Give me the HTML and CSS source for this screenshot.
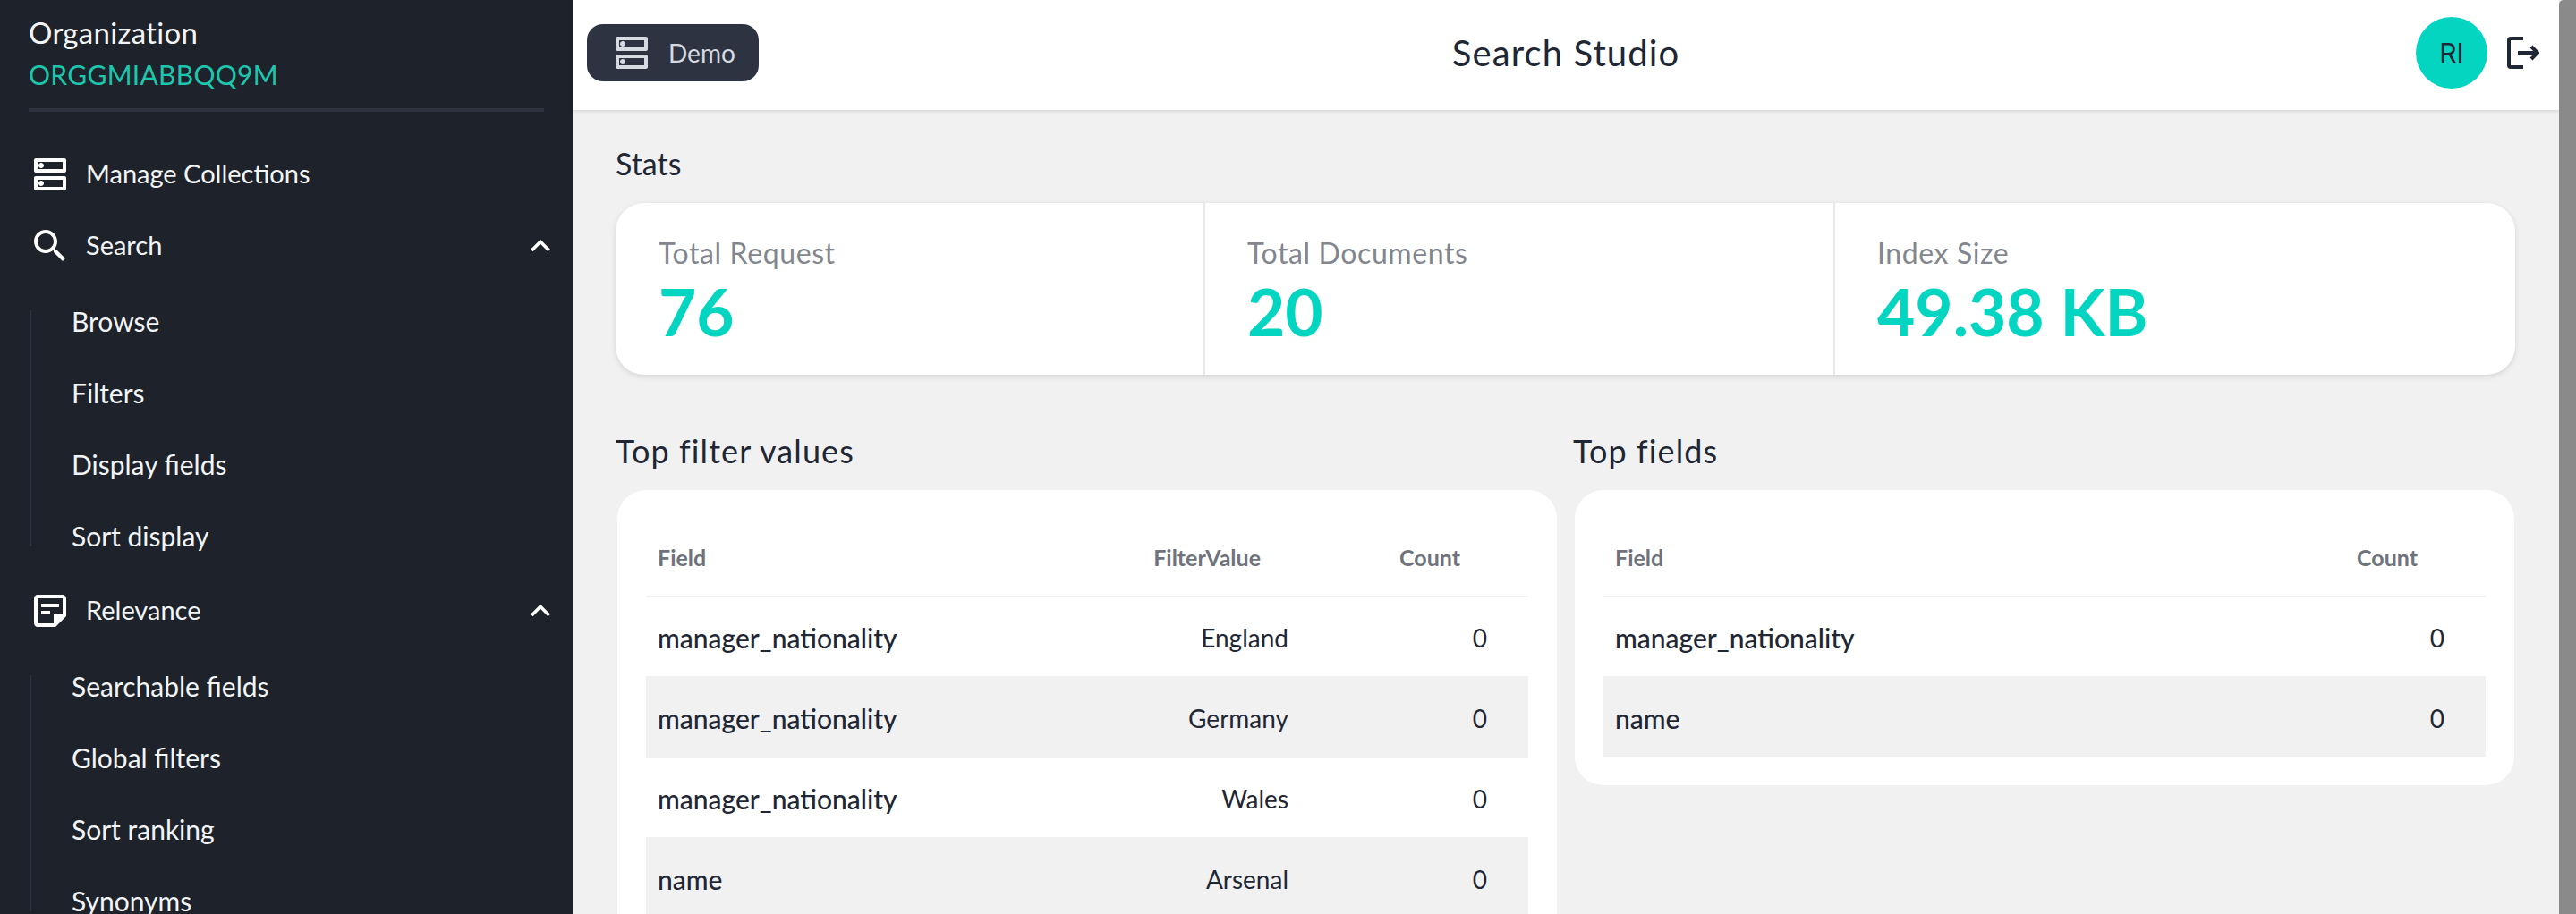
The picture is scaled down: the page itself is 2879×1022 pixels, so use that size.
FILE: index.html
```html
<!DOCTYPE html>
<html>
<head>
    <title>Search Studio</title>
    <link rel="stylesheet" href="styles.css">
</head>
<body>
    <aside class="sidebar">
        <div class="org">
            <div class="org-label">Organization</div>
            <div class="org-id">ORGGMIABBQQ9M</div>
        </div>
        <nav class="nav">
            <div class="nav-item">
                <svg class="nav-icon" viewBox="0 0 24 24"><path d="M19 15v4H5v-4h14m1-2H4c-.55 0-1 .45-1 1v6c0 .55.45 1 1 1h16c.55 0 1-.45 1-1v-6c0-.55-.45-1-1-1zM7 18.5c-.82 0-1.5-.67-1.5-1.5s.68-1.5 1.5-1.5 1.5.67 1.5 1.5-.67 1.5-1.5 1.5zM19 5v4H5V5h14m1-2H4c-.55 0-1 .45-1 1v6c0 .55.45 1 1 1h16c.55 0 1-.45 1-1V4c0-.55-.45-1-1-1zM7 8.5c-.82 0-1.5-.67-1.5-1.5S6.18 5.5 7 5.5 8.5 6.18 8.5 7 7.83 8.5 7 8.5z"/></svg>
                <span class="nav-label">Manage Collections</span>
            </div>
            <div class="nav-item">
                <svg class="nav-icon" viewBox="0 0 24 24"><path d="M15.5 14h-.79l-.28-.27C15.41 12.59 16 11.11 16 9.5 16 5.91 13.09 3 9.5 3S3 5.91 3 9.5 5.91 16 9.5 16c1.61 0 3.09-.59 4.23-1.57l.27.28v.79l5 4.99L20.49 19l-4.99-5zm-6 0C7.01 14 5 11.99 5 9.5S7.01 5 9.5 5 14 7.01 14 9.5 11.99 14 9.5 14z"/></svg>
                <span class="nav-label">Search</span>
                <svg class="nav-chevron" viewBox="0 0 24 24"><path d="M12 8l-6 6 1.41 1.41L12 10.83l4.59 4.58L18 14z"/></svg>
            </div>
            <div class="sub-nav">
                <div class="sub-item">Browse</div>
                <div class="sub-item">Filters</div>
                <div class="sub-item">Display fields</div>
                <div class="sub-item">Sort display</div>
            </div>
            <div class="nav-item">
                <svg class="nav-icon" viewBox="0 0 24 24"><path d="M19 5v9h-5v5H5V5h14m0-2H5c-1.1 0-2 .9-2 2v14c0 1.1.9 2 2 2h10l6-6V5c0-1.1-.9-2-2-2zm-7 11H7v-2h5v2zm5-4H7V8h10v2z"/></svg>
                <span class="nav-label">Relevance</span>
                <svg class="nav-chevron" viewBox="0 0 24 24"><path d="M12 8l-6 6 1.41 1.41L12 10.83l4.59 4.58L18 14z"/></svg>
            </div>
            <div class="sub-nav">
                <div class="sub-item">Searchable fields</div>
                <div class="sub-item">Global filters</div>
                <div class="sub-item">Sort ranking</div>
                <div class="sub-item">Synonyms</div>
            </div>
        </nav>
    </aside>

    <div class="page">
        <header class="topbar">
            <div class="topbar-left">
                <button class="demo-button">
                    <svg class="demo-icon" viewBox="0 0 24 24"><path d="M19 15v4H5v-4h14m1-2H4c-.55 0-1 .45-1 1v6c0 .55.45 1 1 1h16c.55 0 1-.45 1-1v-6c0-.55-.45-1-1-1zM7 18.5c-.82 0-1.5-.67-1.5-1.5s.68-1.5 1.5-1.5 1.5.67 1.5 1.5-.67 1.5-1.5 1.5zM19 5v4H5V5h14m1-2H4c-.55 0-1 .45-1 1v6c0 .55.45 1 1 1h16c.55 0 1-.45 1-1V4c0-.55-.45-1-1-1zM7 8.5c-.82 0-1.5-.67-1.5-1.5S6.18 5.5 7 5.5 8.5 6.18 8.5 7 7.83 8.5 7 8.5z"/></svg>
                    Demo
                </button>
            </div>
            <div class="topbar-title">Search Studio</div>
            <div class="topbar-right">
                <div class="avatar">RI</div>
                <svg class="logout" viewBox="0 0 36 36"><path d="M18 2H4a2 2 0 0 0-2 2v28a2 2 0 0 0 2 2h14M12 18h22M27 11l7 7-7 7"/></svg>
            </div>
        </header>

        <main class="content">
            <h2 class="section-title stats-title">Stats</h2>
            <div class="stats">
                <div class="stat">
                    <div class="stat-label">Total Request</div>
                    <div class="stat-value">76</div>
                </div>
                <div class="stat">
                    <div class="stat-label">Total Documents</div>
                    <div class="stat-value">20</div>
                </div>
                <div class="stat">
                    <div class="stat-label">Index Size</div>
                    <div class="stat-value">49.38 KB</div>
                </div>
            </div>

            <div class="tables">
                <section>
                    <h2 class="section-title">Top filter values</h2>
                    <div class="card">
                        <table>
                            <colgroup><col><col class="col-value"><col class="col-count"></colgroup>
                            <thead>
                                <tr><th>Field</th><th class="num value">FilterValue</th><th class="num count">Count</th></tr>
                            </thead>
                            <tbody>
                                <tr><td class="field">manager_nationality</td><td class="num value">England</td><td class="num count">0</td></tr>
                                <tr class="stripe"><td class="field">manager_nationality</td><td class="num value">Germany</td><td class="num count">0</td></tr>
                                <tr><td class="field">manager_nationality</td><td class="num value">Wales</td><td class="num count">0</td></tr>
                                <tr class="stripe"><td class="field">name</td><td class="num value">Arsenal</td><td class="num count">0</td></tr>
                            </tbody>
                        </table>
                    </div>
                </section>
                <section>
                    <h2 class="section-title">Top fields</h2>
                    <div class="card">
                        <table>
                            <colgroup><col><col class="col-count"></colgroup>
                            <thead>
                                <tr><th>Field</th><th class="num count">Count</th></tr>
                            </thead>
                            <tbody>
                                <tr><td class="field">manager_nationality</td><td class="num count">0</td></tr>
                                <tr class="stripe"><td class="field">name</td><td class="num count">0</td></tr>
                            </tbody>
                        </table>
                    </div>
                </section>
            </div>
        </main>
    </div>

    <div class="scrollbar"></div>
</body>
</html>
```

FILE: styles.css
```css
* {
    box-sizing: border-box;
}

body {
    margin: 0;
    height: 1022px;
    display: flex;
    overflow: hidden;
    font-family: Lato, "Noto Sans", sans-serif;
    background-color: #f1f1f1;
    color: #1f2735;
}

/* sidebar */
.sidebar {
    width: 640px;
    flex-shrink: 0;
    background-color: #1e232b;
    color: #f3f4f6;
}

.org {
    height: 125px;
    margin: 0 32px;
    padding-top: 13px;
    border-bottom: 4px solid #2d3340;
    font-size: 30px;
    line-height: 47px;
}

.org-label {
    font-size: 33px;
    letter-spacing: 0.3px;
}

.org-id {
    color: #1dc7ae;
    letter-spacing: 0.3px;
}

.nav {
    padding-top: 30px;
}

.nav-item {
    height: 80px;
    padding: 0 14px 0 32px;
    display: flex;
    align-items: center;
    gap: 16px;
    font-size: 29px;
}

.nav-label {
    margin-top: -3px;
}

.nav-icon {
    width: 48px;
    height: 48px;
    fill: #fff;
}

.nav-chevron {
    width: 44px;
    height: 44px;
    margin-left: auto;
    fill: #fff;
}

.sub-nav {
    margin: 32px 0 32px 33px;
    padding-left: 45px;
    border-left: 2px solid #2d3340;
    display: flex;
    flex-direction: column;
    gap: 56px;
}

.sub-item {
    height: 24px;
    font-size: 30px;
    line-height: 24px;
}

/* top bar */
.page {
    flex: 1;
    min-width: 0;
}

.topbar {
    height: 123px;
    padding: 0 22px 5px 16px;
    display: grid;
    grid-template-columns: 1fr auto 1fr;
    align-items: center;
    background-color: #fff;
    box-shadow: 0 1px 4px rgba(0, 0, 0, 0.15);
}

.demo-button {
    width: 192px;
    height: 64px;
    padding: 0 0 0 26px;
    display: flex;
    align-items: center;
    gap: 17px;
    border: none;
    border-radius: 18px;
    background-color: #2d3340;
    color: #d6dae1;
    font-family: inherit;
    font-size: 28px;
}

.demo-icon {
    width: 48px;
    height: 48px;
    fill: #d6dae1;
}

.topbar-title {
    margin-left: 6px;
    font-size: 40px;
    letter-spacing: 1.1px;
}

.topbar-right {
    display: flex;
    justify-content: flex-end;
    align-items: center;
    gap: 22px;
}

.avatar {
    width: 80px;
    height: 80px;
    border-radius: 50%;
    background-color: #03d5c0;
    display: flex;
    align-items: center;
    justify-content: center;
    font-family: Inter, sans-serif;
    font-size: 30px;
}

.logout {
    width: 36px;
    height: 36px;
    fill: none;
    stroke: #1f2735;
    stroke-width: 4;
}

/* content */
.content {
    padding: 38px 49px 0 48px;
}

.section-title {
    margin: 0 0 22px;
    font-size: 36px;
    font-weight: 400;
    line-height: 44px;
    letter-spacing: 1.1px;
}

.stats-title {
    font-size: 34px;
    letter-spacing: 0;
}

.stats {
    height: 192px;
    display: grid;
    grid-template-columns: 657px 704px auto;
    background-color: #fff;
    border-radius: 32px;
    box-shadow: 0 2px 6px rgba(0, 0, 0, 0.12);
}

.stat {
    padding: 34px 0 0 47px;
}

.stat:first-child {
    padding-left: 48px;
}

.stat + .stat {
    border-left: 2px solid #e8e8e8;
}

.stat-label {
    font-size: 32px;
    font-weight: 400;
    line-height: 44px;
    letter-spacing: 0.6px;
    color: #82868e;
}

.stat-value {
    font-size: 73px;
    font-weight: 700;
    line-height: 87px;
    color: #03d5c0;
}

.tables {
    margin-top: 63px;
    display: grid;
    grid-template-columns: 1052px 1052px;
    gap: 18px;
}

.card {
    margin: 1px 0 0 2px;
    padding: 32px;
    background-color: #fff;
    border-radius: 32px;
}

table {
    width: 100%;
    table-layout: fixed;
    border-collapse: separate;
    border-spacing: 0;
}

.col-value {
    width: 240px;
}

.col-count {
    width: 244px;
}

th, td {
    box-sizing: content-box;
    padding: 0 0 0 13px;
    border-bottom: 2px solid #f1f1f1;
    text-align: left;
    white-space: nowrap;
}

th {
    height: 86px;
    font-size: 25px;
    font-weight: 700;
    color: #6f737c;
}

td {
    height: 86px;
    padding-top: 2px;
    font-size: 28px;
}

tbody tr:last-child td {
    border-bottom: none;
}

td.field {
    font-size: 30px;
    font-weight: 500;
}

.stripe td {
    background-color: #f1f1f1;
}

th.num, td.num {
    text-align: right;
}

th.value {
    padding-right: 55px;
}

td.value {
    padding-right: 24px;
}

th.count {
    padding-right: 76px;
}

td.count {
    padding-right: 46px;
}

.scrollbar {
    width: 19px;
    flex-shrink: 0;
    background-color: #8a8a8a;
    border-top-left-radius: 5px;
}
```
